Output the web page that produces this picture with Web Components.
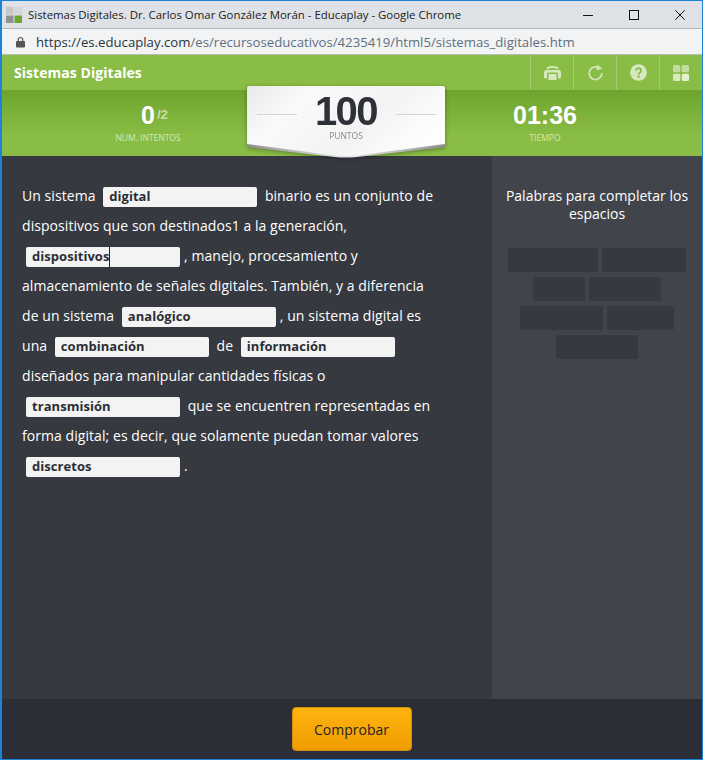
<!DOCTYPE html>
<html lang="es"><head><meta charset="utf-8"><title>Sistemas Digitales</title>
<style>
html,body{margin:0;padding:0;height:100%;background:#1a85d8;}
body{font-family:"Open Sans","Liberation Sans",sans-serif;}
</style></head><body>
<app-window>
  <chrome-bar slot="chrome"></chrome-bar>
  <game-header slot="header"></game-header>
  <stats-band slot="stats"></stats-band>
  <game-body slot="body">
    <fill-text slot="text">
      Un sistema <blank-field>digital</blank-field> binario es un conjunto de dispositivos que son destinados1 a la generación,
      <blank-field caret>dispositivos</blank-field>, manejo, procesamiento y almacenamiento de señales digitales. También, y a diferencia de&nbsp;un&nbsp;sistema <blank-field>analógico</blank-field>, un sistema digital es una <blank-field>combinación</blank-field> de <blank-field>información</blank-field> diseñados para manipular cantidades físicas o
      <blank-field>transmisión</blank-field> que se encuentren representadas en forma digital; es decir, que solamente puedan tomar valores
      <blank-field>discretos</blank-field>.
    </fill-text>
    <word-bank slot="side"></word-bank>
  </game-body>
  <game-footer slot="footer"></game-footer>
</app-window>
<script>
function def(name,html){customElements.define(name,class extends HTMLElement{constructor(){super();this.attachShadow({mode:'open'}).innerHTML=html;}});}
def('app-window',`<style>:host{display:flex;flex-direction:column;box-sizing:border-box;width:703px;height:760px;border:solid #1a85d8;border-width:1px 1px 1px 2px;background:#363940;position:relative;overflow:hidden}
::slotted([slot=body]){flex:1;min-height:0}</style>
<slot name="chrome"></slot><slot name="header"></slot><slot name="stats"></slot><slot name="body"></slot><slot name="footer"></slot>`);
def('chrome-bar',`<style>:host{display:block;font-family:"Open Sans","Liberation Sans",sans-serif}
.title{box-sizing:border-box;height:28px;background:#dee1e6;display:flex;align-items:center;padding-left:4px;font-size:11.420px;color:#222;border-bottom:1px solid #b4b6b9}
.title svg.logo{margin-right:6px;flex:none}
.title span{flex:1}
.win{display:flex;align-items:center;gap:36px;margin-right:17px}
.win svg{display:block}
.addr{box-sizing:border-box;height:26px;background:#f1f3f4;display:flex;align-items:center;padding-left:14px;font-size:13.180px;color:#5f6f7f;border-bottom:1px solid #b9bbbd}
.addr svg{margin-right:11px;flex:none}
.addr b{font-weight:400;color:#27343f}
</style>
<div class="title"><svg class="logo" width="16" height="16" viewBox="0 0 16 16"><rect width="7.500" height="7.500" fill="#c6c8ca"/><rect x="8.500" width="7.500" height="7.500" fill="#d5d6d8"/><rect y="8.500" width="7.500" height="7.500" fill="#8f9296"/><rect x="8.500" y="8.500" width="7.500" height="7.500" fill="#6fa62f"/></svg>
<span>Sistemas Digitales. Dr. Carlos Omar González Morán - Educaplay - Google Chrome</span>
<div class="win">
<svg width="10" height="10" viewBox="0 0 10 10"><path d="M0 5.500h10" stroke="#111" fill="none"/></svg>
<svg width="10" height="10" viewBox="0 0 10 10"><rect x=".5" y=".5" width="9" height="9" stroke="#111" fill="none"/></svg>
<svg width="10" height="10" viewBox="0 0 10 10"><path d="M.3.3l9.400 9.400M9.700.3L.3 9.700" stroke="#111" fill="none"/></svg>
</div></div>
<div class="addr"><svg width="9" height="12" viewBox="0 0 10 12"><path d="M2.500 5V3.500a2.500 2.500 0 015 0V5" stroke="#555" stroke-width="1.300" fill="none"/><rect y="5" width="10" height="7" rx="1" fill="#555"/></svg><span><b>https://es.educaplay.com</b>/es/recursoseducativos/4235419/html5/sistemas_digitales.htm</span></div>`);
def('game-header',`<style>:host{display:flex;height:35px;background:#8abd46;align-items:stretch;font-family:"Open Sans","Liberation Sans",sans-serif}
h1{flex:1;margin:0;font-size:14px;font-weight:700;color:#fff;line-height:35px;padding-left:12px;letter-spacing:.05px}
.b{box-sizing:border-box;width:43px;border-left:1px solid #a5cd70;display:flex;align-items:center;justify-content:center}</style>
<h1>Sistemas Digitales</h1>
<div class="b"><svg width="17" height="14" viewBox="0 0 17 14"><path d="M3 2.800C4 1.400 6 1 8.500 1s4.500.4 5.500 1.800" stroke="#d6e8bd" stroke-width="1.800" fill="none"/><path fill-rule="evenodd" d="M2.500 4h12A2.500 2.500 0 0117 6.500V11a1.500 1.500 0 01-1.500 1.500H14V8a1.500 1.500 0 00-1.500-1.500h-8A1.500 1.500 0 003 8v4.500H1.500A1.500 1.500 0 010 11V6.500A2.500 2.500 0 012.500 4z" fill="#d6e8bd"/><rect x="4.500" y="8" width="8" height="6" rx=".6" fill="#d6e8bd"/></svg></div>
<div class="b"><svg width="17" height="17" viewBox="0 0 18 18"><path d="M10.500 3.300A6.700 6.700 0 1015.700 9.500" stroke="#d3e6b8" stroke-width="1.900" fill="none"/><path d="M10.500 .5l6 4.500-6.500 1.500z" fill="#d3e6b8"/></svg></div>
<div class="b"><svg width="17" height="17" viewBox="0 0 18 18"><circle cx="9" cy="9" r="8.800" fill="#d6e8bd"/><path d="M6.300 7a2.700 2.500 0 115 1.200C10.500 9.300 9.200 9.500 9.200 11" stroke="#8abd46" stroke-width="2" fill="none"/><rect x="8" y="12.300" width="2.300" height="2.300" fill="#8abd46"/></svg></div>
<div class="b"><svg width="16" height="16" viewBox="0 0 16 16" fill="#c3dd9f"><rect width="7.300" height="7.300" rx="1.500"/><rect x="8.700" width="7.300" height="7.300" rx="1.500"/><rect y="8.700" width="7.300" height="7.300" rx="1.500" fill="#d8e9c1"/><rect x="8.700" y="8.700" width="7.300" height="7.300" rx="1.500" fill="#e3f0d2"/></svg></div>`);
def('stat-box',`<style>:host{display:flex;flex-direction:column;align-items:center;font-family:"Open Sans","Liberation Sans",sans-serif;color:#fff}
.v{font:700 25px/30px "Liberation Sans",Arial,sans-serif;height:30px}
.l{font-size:8.500px;line-height:12px;color:#d5e8ad;margin-top:2px}</style>
<div class="v"><slot></slot></div><div class="l"><slot name="label"></slot></div>`);
def('stats-band',`<style>:host{display:flex;position:relative;height:66px;box-sizing:border-box;padding-top:10px;background:linear-gradient(#6ea42d,#8abd46 70%);justify-content:space-between;font-family:"Open Sans","Liberation Sans",sans-serif}
.s{display:inline-block;width:12px;margin-right:-14px;margin-left:2px;font:700 13.500px/1 "Liberation Sans",Arial,sans-serif;color:#c8dfa4;position:relative;top:-5px;letter-spacing:-.3px}
.right{margin-right:57px;width:200px}
.card{position:absolute;left:245px;top:-4px;width:198px;height:72px;filter:drop-shadow(0 1px 2px rgba(0,0,0,.35))}
.card svg{position:absolute;inset:0}
.inner{position:absolute;inset:0;display:flex;flex-direction:column;align-items:center;color:#2e3137}
.num{font:700 40px/40px "Liberation Sans",Arial,sans-serif;margin-top:5px;letter-spacing:-1.500px}
.pts{font-size:8.500px;line-height:10px;color:#888;margin-top:0}
.rule{position:absolute;top:28px;width:40px;height:1px;background:#d4d4d4}
</style>
<stat-box style="width:292px"><span>0<span class="s">/2</span></span><span slot="label">NUM. INTENTOS</span></stat-box>
<div class="card"><svg width="198" height="72" viewBox="0 0 198 72"><defs><linearGradient id="g" x1="0" y1="0" x2="1" y2=".4"><stop offset="0" stop-color="#e9e9e9"/><stop offset=".3" stop-color="#fafafa"/><stop offset=".7" stop-color="#f3f3f3"/><stop offset="1" stop-color="#fdfdfd"/></linearGradient>
<linearGradient id="e"><stop offset="0" stop-color="#8f8f8f"/><stop offset=".45" stop-color="#e2e2e2"/><stop offset=".55" stop-color="#e2e2e2"/><stop offset="1" stop-color="#8f8f8f"/></linearGradient></defs>
<path d="M0 58V61L88 71Q99 72 110 71L198 61V58z" fill="url(#e)"/>
<path d="M2 0H196a2 2 0 012 2V58L110 69.500Q99 70.500 88 69.500L0 58V2A2 2 0 012 0z" fill="url(#g)"/></svg>
<div class="inner"><div class="num">100</div><div class="pts">PUNTOS</div><div class="rule" style="left:10px"></div><div class="rule" style="right:9px"></div></div></div>
<stat-box class="right"><span>01:36</span><span slot="label">TIEMPO</span></stat-box>`);
def('game-body',`<style>:host{display:flex;background:#363940;min-height:0}
.l{flex:1;min-width:0}.r{width:210px;background:#41454b;flex:none}</style>
<div class="l"><slot name="text"></slot></div><div class="r"><slot name="side"></slot></div>`);
def('fill-text',`<style>:host{display:block;box-sizing:border-box;padding:25px 45px 0 20px;font:14px/30px "Open Sans","Liberation Sans",sans-serif;letter-spacing:.06px;color:#fff;height:100%}</style><slot></slot>`);
def('blank-field',`<style>:host{display:inline-block;vertical-align:baseline;box-sizing:border-box;width:154px;height:20px;margin:0 4px;background:#f3f3f3;border-radius:2px;padding-left:6px;font:700 13px/18px "Open Sans","Liberation Sans",sans-serif;letter-spacing:.05px;color:#2b2e33;white-space:nowrap;position:relative;top:0}
span{display:inline-block;height:20px;vertical-align:top}
:host([caret]) span{border-right:1px solid #222}</style><span><slot></slot></span>`);
def('word-bank',`<style>:host{display:block;box-sizing:border-box;padding:31px 0 0;color:#fff;font:14px/18px "Open Sans","Liberation Sans",sans-serif;text-align:center}
h2{font:inherit;margin:0 auto 25px;width:190px}
.w{display:flex;flex-wrap:wrap;justify-content:center;gap:5px 4px;width:190px;margin:0 auto}
.w i{display:block;height:24px;background:#363940;border-radius:2px}</style>
<h2>Palabras para completar los espacios</h2>
<div class="w"><i style="width:90px"></i><i style="width:84px"></i><i style="width:52px"></i><i style="width:72px"></i><i style="width:83px"></i><i style="width:67px"></i><i style="width:82px"></i></div>`);
def('game-footer',`<style>:host{display:flex;flex:none;height:60px;background:#2b2e36;justify-content:center;align-items:center;font-family:"Open Sans","Liberation Sans",sans-serif}
button{width:120px;height:44px;border:1px solid #d18d06;border-radius:4px;background:linear-gradient(#ffb40f,#f09c00);font:14px "Open Sans","Liberation Sans",sans-serif;color:#1f2228;padding:0;margin-left:-1px}</style>
<button>Comprobar</button>`);
</script>
</body></html>
